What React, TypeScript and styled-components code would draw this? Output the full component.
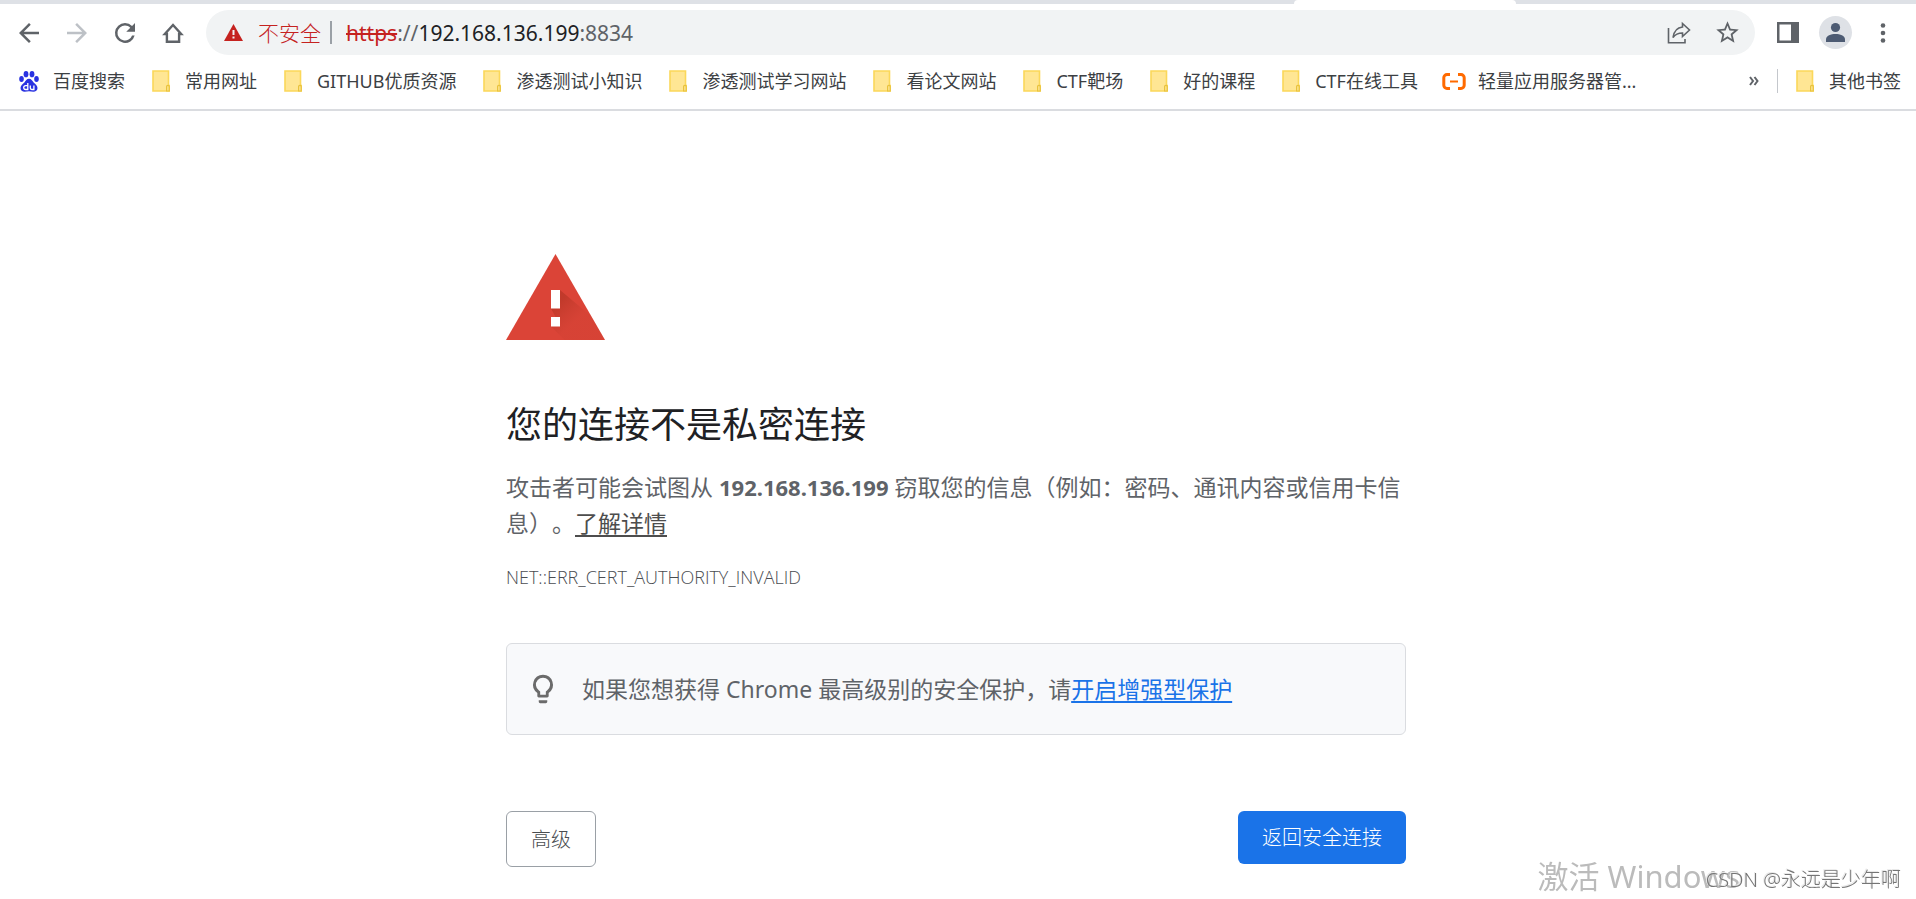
import React from "react";
import styled, { createGlobalStyle } from "styled-components";

const GlobalStyle = createGlobalStyle`
  *, *::before, *::after { box-sizing: border-box; }
  body {
    margin: 0;
    background: #fff;
    color: #5f6368;
    font-family: "Noto Sans", "Noto Sans CJK SC", sans-serif;
    text-spacing-trim: space-all;
  }
  h1, p { margin: 0; }
  button { font-family: inherit; cursor: pointer; }
  svg { display: block; flex: none; }
`;

const Window = styled.div`
  min-height: 100vh;
  display: flex;
  flex-direction: column;
  overflow: hidden;
`;

const TabStrip = styled.div`
  display: flex;
  height: 4px;
  background: #dee1e6;
`;
const TabsBefore = styled.div`
  flex: 1;
`;
const ActiveTab = styled.div`
  width: 222px;
  margin-right: 400px;
  background: #fff;
  border-radius: 4px 4px 0 0;
`;

const Toolbar = styled.nav`
  display: flex;
  align-items: center;
  gap: 18px;
  padding: 6px 18px 0 14px;
`;
const IconButton = styled.button<{ $muted?: boolean; $size?: number }>`
  display: flex;
  align-items: center;
  justify-content: center;
  flex: none;
  width: ${(p) => p.$size ?? 30}px;
  height: ${(p) => p.$size ?? 30}px;
  padding: 0;
  border: 0;
  background: none;
  color: ${(p) => (p.$muted ? "#bdc1c6" : "#5f6368")};
`;
const Omnibox = styled.div`
  flex: 1;
  display: flex;
  align-items: center;
  height: 45px;
  padding: 0 13px 0 18px;
  border-radius: 23px;
  background: #f1f3f4;
  font-size: 21px;
  line-height: 30px;
  white-space: nowrap;
`;
const SecurityChip = styled.button`
  display: flex;
  align-items: center;
  gap: 15px;
  padding: 0;
  border: 0;
  background: none;
  color: #c5221f;
  font-size: 21px;
  font-weight: 300;
  line-height: 30px;
`;
const ChipDivider = styled.span`
  width: 2px;
  height: 23px;
  margin: 0 14px 0 9px;
  background: #9aa0a6;
`;
const Url = styled.div`
  flex: 1;
  color: #5f6368;
  s { color: #c5221f; text-decoration-thickness: 2px; }
  b { color: #202124; font-weight: 400; }
`;
const OmniActions = styled.div`
  display: flex;
  gap: 18px;
`;
const BrowserActions = styled.div`
  display: flex;
  align-items: center;
  gap: 16px;
`;
const Avatar = styled.button`
  width: 33px;
  height: 33px;
  padding: 0;
  border: 0;
  border-radius: 50%;
  background: #dee1e6;
`;

const BookmarkBar = styled.nav`
  display: flex;
  align-items: center;
  gap: 26px;
  height: 56px;
  padding: 0 15px 2px 19px;
  border-bottom: 2px solid #dadce0;
`;
const Bookmark = styled.a`
  display: flex;
  align-items: center;
  gap: 14px;
  color: #3c4043;
  font-size: 18px;
  line-height: 26px;
  text-decoration: none;
  white-space: nowrap;
`;
const BookmarkIcon = styled.span`
  display: flex;
  justify-content: center;
  width: 20px;
`;
const Overflow = styled.div`
  display: flex;
  align-items: center;
  gap: 17px;
  margin-left: auto;
`;
const OverflowDivider = styled.span`
  width: 1px;
  height: 24px;
  background: #c4c7cc;
`;

const Interstitial = styled.main`
  width: 100%;
  max-width: 904px;
  margin: 0 auto;
  padding: 143px 4px 32px 0;
`;
const Heading = styled.h1`
  margin-top: 59px;
  color: #202124;
  font-size: 36px;
  font-weight: 400;
  line-height: 52px;
`;
const Message = styled.p`
  margin-top: 18px;
  font-size: 23px;
  line-height: 36px;
  strong { font-size: 22px; }
`;
const TextLink = styled.a<{ $primary?: boolean }>`
  color: ${(p) => (p.$primary ? "#1a73e8" : "#4d4d4d")};
  text-decoration: underline;
  text-decoration-thickness: 2px;
  text-underline-offset: 3px;
  text-decoration-skip-ink: none;
`;
const ErrorCode = styled.p`
  margin-top: 23px;
  color: #4a4d51;
  font-family: "Open Sans", "Noto Sans", sans-serif;
  font-size: 18px;
  font-weight: 300;
  line-height: 26px;
`;
const Tip = styled.section`
  display: flex;
  align-items: center;
  gap: 22px;
  margin-top: 53px;
  padding: 27px 19px;
  border: 1px solid #dadce0;
  border-radius: 6px;
  background: #f8f9fb;
  font-size: 23px;
  line-height: 36px;
`;
const Actions = styled.div`
  display: flex;
  align-items: flex-start;
  justify-content: space-between;
  margin-top: 76px;
`;
const ActionButton = styled.button<{ $primary?: boolean }>`
  padding: ${(p) => (p.$primary ? "11px 24px" : "12px 24px 11px")};
  border: ${(p) => (p.$primary ? "0" : "1px solid #9aa0a6")};
  border-radius: 6px;
  background: ${(p) => (p.$primary ? "#1a73e8" : "#fff")};
  color: ${(p) => (p.$primary ? "#fff" : "#4a4d51")};
  font-size: 20px;
  font-weight: 300;
  line-height: 31px;
`;

const ActivationMark = styled.div`
  position: fixed;
  right: 176px;
  bottom: 3px;
  color: #bbb;
  font-size: 31px;
  line-height: 40px;
  pointer-events: none;
  white-space: nowrap;
`;
const AuthorMark = styled.div`
  position: fixed;
  right: 15px;
  bottom: 4px;
  color: #757575;
  font-size: 20px;
  font-weight: 300;
  line-height: 30px;
  pointer-events: none;
  text-shadow: -1px -1px 0 #e8e8e8;
  white-space: nowrap;
`;

const Glyph = ({ d, size = 30 }: { d: string; size?: number }) => (
  <svg width={size} height={size} viewBox="0 0 24 24" fill="currentColor" aria-hidden="true">
    <path d={d} />
  </svg>
);

const FolderIcon = () => (
  <svg width="18" height="22" viewBox="0 0 18 22" aria-hidden="true">
    <path d="M1 1h15.5v14.5h1V21H1z" fill="#ffe694" stroke="#fbd85a" strokeWidth="1.6" />
    <path d="M14.6 21v-4.6q0-1 1.2-1t1.4 1V21z" fill="#ffe694" stroke="#e8c23c" strokeWidth="1.2" />
  </svg>
);

const PawIcon = () => (
  <svg width="20" height="21" viewBox="0 0 20 21" fill="#2932e1" aria-hidden="true">
    <ellipse cx="7" cy="3.2" rx="2.4" ry="3.1" />
    <ellipse cx="13" cy="3.2" rx="2.4" ry="3.1" />
    <ellipse cx="2.5" cy="8" rx="2.3" ry="2.9" />
    <ellipse cx="17.5" cy="8" rx="2.3" ry="2.9" />
    <path d="M10 7.8c2.4 0 3.1 2 4.6 3.6 1.9 1.8 3.9 3 3.9 5.6 0 2.6-2 3.8-4.1 3.8-1.6 0-2.9-.5-4.4-.5s-2.8.5-4.4.5c-2.1 0-4.1-1.2-4.1-3.8 0-2.6 2-3.8 3.9-5.6C6.9 9.800 7.600 7.800 10 7.800z" />
    <path d="M8.800 12v6.500H6.600a1.900 1.900 0 0 1 0-3.800h2.200M11.300 14.400v2.700q0 1.400 1.400 1.400h2.200v-4.100" fill="none" stroke="#fff" strokeWidth="1.3" />
  </svg>
);

const CloudIcon = () => (
  <svg width="24" height="17" viewBox="0 0 24 17" fill="none" stroke="#ff6a00" strokeWidth="3" aria-hidden="true">
    <path d="M8 1.600H5a3.200 3.200 0 0 0-3.200 3.200v7.400A3.200 3.200 0 0 0 5 15.400h3M16 1.600h3a3.200 3.200 0 0 1 3.200 3.200v7.400a3.200 3.200 0 0 1-3.200 3.200h-3" />
    <path d="M8 8.500h8" strokeWidth="2" />
  </svg>
);

const DangerIcon = () => (
  <svg width="99" height="86" viewBox="0 0 99 86" aria-hidden="true">
    <defs>
      <linearGradient id="shade" gradientUnits="userSpaceOnUse" x1="49" y1="52" x2="66" y2="70">
        <stop offset="0" stopColor="#a8301f" stopOpacity=".5" />
        <stop offset="1" stopColor="#b8382a" stopOpacity=".12" />
      </linearGradient>
    </defs>
    <path d="M49.500 0L99 86H0z" fill="#db4437" />
    <path d="M54 36l31.500 26.500L99 86H58.500L45 72.500V63h4.500L45 54.500z" fill="url(#shade)" />
    <path d="M45 36h9v18.500h-9zM45 63h9v9.500h-9z" fill="#fff" />
  </svg>
);

const bookmarks = [
  { title: "百度搜索", icon: <PawIcon /> },
  { title: "常用网址" },
  { title: "GITHUB优质资源" },
  { title: "渗透测试小知识" },
  { title: "渗透测试学习网站" },
  { title: "看论文网站" },
  { title: "CTF靶场" },
  { title: "好的课程" },
  { title: "CTF在线工具" },
  { title: "轻量应用服务器管...", icon: <CloudIcon /> },
];

const BookmarkLink = ({ title, icon }: { title: string; icon?: React.ReactNode }) => (
  <Bookmark href="#">
    <BookmarkIcon>{icon ?? <FolderIcon />}</BookmarkIcon>
    {title}
  </Bookmark>
);

export default function App() {
  return (
    <Window>
      <GlobalStyle />
      <TabStrip>
        <TabsBefore />
        <ActiveTab />
      </TabStrip>
      <Toolbar>
        <IconButton aria-label="后退">
          <Glyph d="M20 11H7.830l5.590-5.590L12 4l-8 8 8 8 1.410-1.410L7.830 13H20v-2z" />
        </IconButton>
        <IconButton aria-label="前进" $muted>
          <Glyph d="M12 4l-1.410 1.410L16.170 11H4v2h12.170l-5.580 5.590L12 20l8-8z" />
        </IconButton>
        <IconButton aria-label="重新加载">
          <Glyph d="M17.650 6.350A7.960 7.960 0 0 0 12 4a8 8 0 1 0 7.730 10h-2.080A6 6 0 1 1 12 6c1.660 0 3.140.69 4.220 1.780L13 11h7V4z" />
        </IconButton>
        <IconButton aria-label="主页">
          <svg width="30" height="30" viewBox="0 0 30 30" fill="none" stroke="currentColor" strokeWidth="2.4" aria-hidden="true">
            <path d="M15 7L6.800 16h2.100v7.800h12.200V16h2.100z" />
          </svg>
        </IconButton>
        <Omnibox>
          <SecurityChip>
            <svg width="19" height="17" viewBox="0 0 19 17" aria-hidden="true">
              <path d="M9.500 0L19 17H0z" fill="#c5221f" />
              <path d="M8.500 6h2v5h-2zM8.500 12.500h2v2h-2z" fill="#f1f3f4" />
            </svg>
            不安全
          </SecurityChip>
          <ChipDivider />
          <Url role="textbox" aria-label="地址" tabIndex={0}>
            <s>https</s>://<b>192.168.136.199</b>:8834
          </Url>
          <OmniActions>
            <IconButton aria-label="分享">
              <svg width="24" height="24" viewBox="0 0 24 24" fill="none" stroke="currentColor" strokeWidth="1.6" aria-hidden="true">
                <path d="M1.500 7v14.800H18V18" />
                <path d="M15.500 2.500L22.500 9l-7 6.500V12c-4 0-7 1-9.500 4.500C7 10 10.500 6.500 15.500 6z" />
              </svg>
            </IconButton>
            <IconButton aria-label="添加书签">
              <Glyph size={27} d="M22 9.240l-7.190-.62L12 2 9.190 8.630 2 9.240l5.460 4.730L5.820 21 12 17.270 18.180 21l-1.630-7.030zM12 15.400l-3.760 2.270 1-4.280-3.320-2.880 4.380-.38L12 6.100l1.710 4.040 4.380.38-3.320 2.880 1 4.280z" />
            </IconButton>
          </OmniActions>
        </Omnibox>
        <BrowserActions>
          <IconButton aria-label="侧边栏">
            <svg width="22" height="21" viewBox="0 0 22 21" aria-hidden="true">
              <path d="M0 0h22v21H0zM2.500 2.500v16H14v-16z" fill="currentColor" fillRule="evenodd" />
            </svg>
          </IconButton>
          <Avatar aria-label="用户">
            <svg width="33" height="33" viewBox="0 0 33 33" fill="#4d5b73" aria-hidden="true">
              <circle cx="16.500" cy="11.500" r="4.600" />
              <path d="M7 26v-2.500c0-4 5-5.500 9.500-5.500s9.500 1.500 9.500 5.500V26z" />
            </svg>
          </Avatar>
          <IconButton aria-label="菜单">
            <svg width="6" height="20" viewBox="0 0 6 20" fill="currentColor" aria-hidden="true">
              <circle cx="3" cy="2.500" r="2.300" />
              <circle cx="3" cy="10" r="2.300" />
              <circle cx="3" cy="17.500" r="2.300" />
            </svg>
          </IconButton>
        </BrowserActions>
      </Toolbar>
      <BookmarkBar>
        {bookmarks.map((b) => (
          <BookmarkLink key={b.title} {...b} />
        ))}
        <Overflow>
          <IconButton aria-label="更多书签" $size={12}>
            <svg width="10" height="10" viewBox="0 0 10 10" fill="none" stroke="currentColor" strokeWidth="2" aria-hidden="true">
              <path d="M1 1l3 4-3 4M5.500 1l3 4-3 4" />
            </svg>
          </IconButton>
          <OverflowDivider />
          <BookmarkLink title="其他书签" />
        </Overflow>
      </BookmarkBar>
      <Interstitial>
        <DangerIcon />
        <Heading>您的连接不是私密连接</Heading>
        <Message>
          攻击者可能会试图从 <strong>192.168.136.199</strong>{" "}
          窃取您的信息（例如：密码、通讯内容或信用卡信息）。<TextLink href="#">了解详情</TextLink>
        </Message>
        <ErrorCode>NET::ERR_CERT_AUTHORITY_INVALID</ErrorCode>
        <Tip>
          <svg width="34" height="34" viewBox="0 0 24 24" fill="#6b6b6b" aria-hidden="true">
            <path d="M9 21c0 .55.45 1 1 1h4c.55 0 1-.45 1-1v-1H9zM12 2a7 7 0 0 0-4 12.740V17c0 .55.45 1 1 1h6c.55 0 1-.45 1-1v-2.260A7 7 0 0 0 12 2zm2.850 11.100l-.85.6V16h-4v-2.300l-.85-.6A5 5 0 1 1 14.850 13.100z" />
          </svg>
          <p>
            如果您想获得 Chrome 最高级别的安全保护，请
            <TextLink href="#" $primary>
              开启增强型保护
            </TextLink>
          </p>
        </Tip>
        <Actions>
          <ActionButton>高级</ActionButton>
          <ActionButton $primary>返回安全连接</ActionButton>
        </Actions>
      </Interstitial>
      <ActivationMark>激活 Windows</ActivationMark>
      <AuthorMark>CSDN @永远是少年啊</AuthorMark>
    </Window>
  );
}
